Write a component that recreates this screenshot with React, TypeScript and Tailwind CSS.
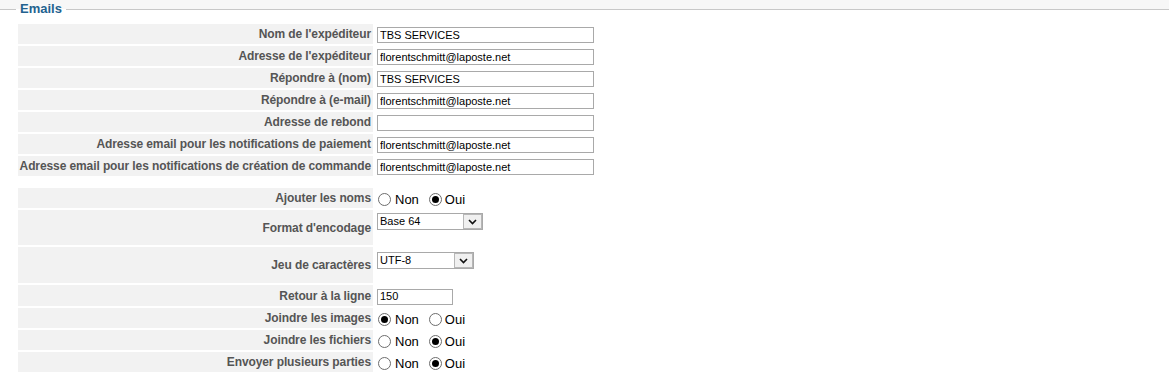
import React from 'react';

type RadioValue = 'Non' | 'Oui';

const Row: React.FC<{ label: string; h?: string; top?: boolean; children: React.ReactNode }> = ({
  label,
  h = 'h-[20px]',
  top = false,
  children,
}) => (
  <div className={`flex ${h}`}>
    <div className="w-[355px] shrink-0 bg-[#f2f2f2] flex items-center justify-end pr-[2px] whitespace-nowrap tracking-[-0.1px] text-[12px] font-bold text-[#555]">
      {label}
    </div>
    <div className={`pl-[4px] flex ${top ? 'items-start' : 'items-center'}`}>{children}</div>
  </div>
);

const TextInput: React.FC<{ value: string; w?: string }> = ({ value, w = 'w-[217px]' }) => (
  <input
    readOnly
    value={value}
    className={`${w} h-[16px] mt-[2px] border border-[#a9a9a9] bg-white px-[2px] py-0 text-[11px] text-black outline-none`}
  />
);

const Radio: React.FC<{ checked: boolean }> = ({ checked }) => (
  <span className="w-[13px] h-[13px] rounded-full border border-[#6d6d6d] bg-white flex items-center justify-center shrink-0">
    {checked && <span className="w-[7px] h-[7px] rounded-full bg-black" />}
  </span>
);

const YesNo: React.FC<{ value: RadioValue }> = ({ value }) => (
  <div className="flex items-center ml-[1px] mt-[3px] text-[13px] text-black">
    <Radio checked={value === 'Non'} />
    <span className="ml-[4px]">Non</span>
    <span className="ml-[10px]">
      <Radio checked={value === 'Oui'} />
    </span>
    <span className="ml-[3px]">Oui</span>
  </div>
);

const FakeSelect: React.FC<{ value: string; w: string; mt: string }> = ({ value, w, mt }) => (
  <div className={`${w} ${mt} h-[17px] border border-[#a9a9a9] bg-white flex`}>
    <span className="flex-1 px-[2px] text-[11px] leading-[14px] text-black">{value}</span>
    <span className="w-[19px] h-[15px] bg-[#f0f0f0] border border-[#b7b7b7] flex items-center justify-center">
      <svg width="9" height="6" viewBox="0 0 9 6">
        <polyline points="1,1 4.5,4.5 8,1" fill="none" stroke="#111" strokeWidth="1.6" />
      </svg>
    </span>
  </div>
);

export default function App() {
  return (
    <div className="min-h-screen bg-[#f7f7f7] font-['Liberation_Sans',Arial,sans-serif]">
      <fieldset className="min-w-0 m-0 p-0 border-0 border-t border-[#c8c8c8] bg-white min-h-[400px]">
        <legend className="ml-[16px] px-[4px] text-[13px] font-bold leading-[18px] text-[#23628f]">Emails</legend>

        <div className="pt-[6px] pl-[18px] flex flex-col gap-[2px]">
          {/* Expéditeur / adresses */}
          <Row label="Nom de l'expéditeur">
            <TextInput value="TBS SERVICES" />
          </Row>
          <Row label="Adresse de l'expéditeur">
            <TextInput value="florentschmitt@laposte.net" />
          </Row>
          <Row label="Répondre à (nom)">
            <TextInput value="TBS SERVICES" />
          </Row>
          <Row label="Répondre à (e-mail)">
            <TextInput value="florentschmitt@laposte.net" />
          </Row>
          <Row label="Adresse de rebond">
            <TextInput value="" />
          </Row>
          <Row label="Adresse email pour les notifications de paiement">
            <TextInput value="florentschmitt@laposte.net" />
          </Row>
          <Row label="Adresse email pour les notifications de création de commande">
            <TextInput value="florentschmitt@laposte.net" />
          </Row>

          <div className="h-[8px]" />

          {/* Options d'envoi */}
          <Row label="Ajouter les noms">
            <YesNo value="Oui" />
          </Row>
          <Row label="Format d'encodage" h="h-[35px]" top>
            <FakeSelect value="Base 64" w="w-[106px]" mt="mt-[3px]" />
          </Row>
          <Row label="Jeu de caractères" h="h-[36px]" top>
            <FakeSelect value="UTF-8" w="w-[97px]" mt="mt-[5px]" />
          </Row>
          <Row label="Retour à la ligne" h="h-[21px]">
            <TextInput value="150" w="w-[76px]" />
          </Row>
          <Row label="Joindre les images">
            <YesNo value="Non" />
          </Row>
          <Row label="Joindre les fichiers">
            <YesNo value="Oui" />
          </Row>
          <Row label="Envoyer plusieurs parties">
            <YesNo value="Oui" />
          </Row>
        </div>
      </fieldset>
    </div>
  );
}
